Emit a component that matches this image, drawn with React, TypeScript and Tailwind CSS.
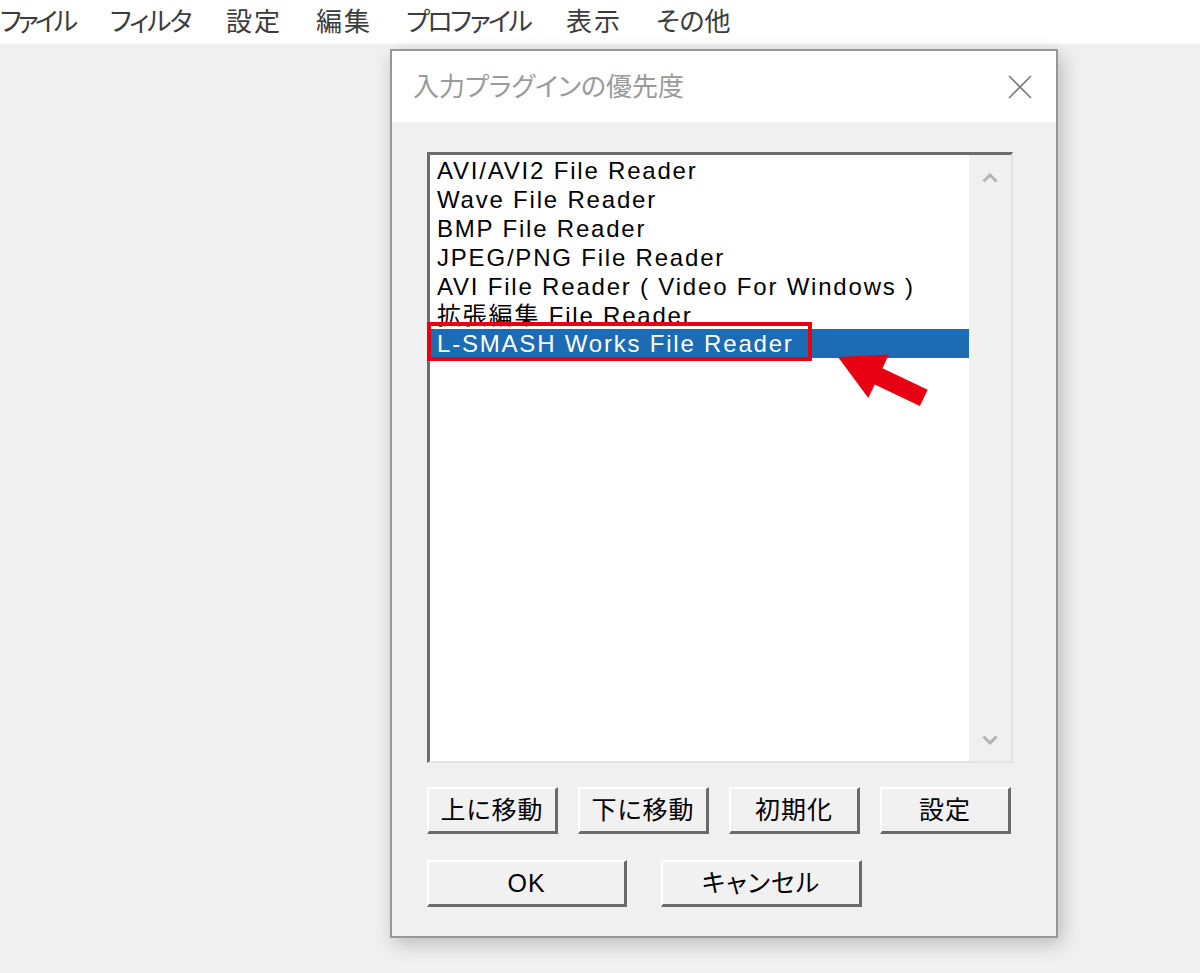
import React from "react";

const jp = "font-['Liberation_Sans','Noto_Sans_CJK_JP',sans-serif] [font-feature-settings:'palt']";

const menu: { label: string; w: string; t: string }[] = [
  { label: "ファイル", w: "w-[110px]", t: "tracking-[-4px]" },
  { label: "フィルタ", w: "w-[116px]", t: "tracking-[-2px]" },
  { label: "設定", w: "w-[90px]", t: "tracking-[2px]" },
  { label: "編集", w: "w-[90px]", t: "tracking-[2px]" },
  { label: "プロファイル", w: "w-[160px]", t: "tracking-[-2.5px]" },
  { label: "表示", w: "w-[90px]", t: "tracking-[2px]" },
  { label: "その他", w: "w-[90px]", t: "tracking-[0px]" },
];

const items = [
  "AVI/AVI2 File Reader",
  "Wave File Reader",
  "BMP File Reader",
  "JPEG/PNG File Reader",
  "AVI File Reader ( Video For Windows )",
  "拡張編集 File Reader",
];

function Btn({ label, w }: { label: string; w: string }) {
  return (
    <div
      className={`${w} h-[47px] flex items-center justify-center bg-[#f1f1f1] border-t-2 border-l-2 border-white border-r-[3px] border-b-[3px] border-r-[#6a6a6a] border-b-[#6a6a6a] text-[25px] tracking-[1px] text-black leading-none`}
    >
      {label}
    </div>
  );
}

export default function App() {
  return (
    <div className={`w-[1200px] h-[973px] flex flex-col bg-[#f0f0f0] overflow-hidden ${jp}`}>
      <div className="h-[44px] bg-white flex items-center text-[26px] text-[#3c3c3c] leading-none">
        {menu.map((m) => (
          <span key={m.label} className={`${m.w} ${m.t} shrink-0`}>
            {m.label}
          </span>
        ))}
      </div>

      <div className="flex-1 pl-[390px] pt-[5px]">
        <div className="w-[668px] h-[889px] border-2 border-[#979797] bg-[#f0f0f0] flex flex-col shadow-[4px_6px_18px_rgba(0,0,0,0.22)]">
          <div className="h-[71px] bg-white flex items-center justify-between pl-[21px] pr-[24px]">
            <span className="text-[26px] text-[#9a9a9a] leading-none">入力プラグインの優先度</span>
            <svg width="24" height="24" viewBox="0 0 24 24">
              <path d="M1 1 L23 23 M23 1 L1 23" stroke="#7a7a7a" strokeWidth="1.6" fill="none" />
            </svg>
          </div>

          <div className="flex-1 flex flex-col pl-[35px] pt-[30px]">
            <div className="w-[586px] h-[611px] flex border-t-[3px] border-l-[3px] border-t-[#6c6c6c] border-l-[#6c6c6c] border-r-2 border-b-2 border-r-[#e4e4e4] border-b-[#e4e4e4] bg-white">
              <div className="flex-1 flex flex-col text-[24px] tracking-[1.8px] text-black">
                {items.map((t) => (
                  <div key={t} className="h-[29px] pl-[7px] leading-[29px] pt-[1px] whitespace-nowrap">
                    {t}
                  </div>
                ))}
                <div className="relative z-10 h-[29px] pl-[7px] leading-[29px] bg-[#1b6cb4] text-white whitespace-nowrap">
                  L-SMASH Works File Reader
                  <div className="absolute -left-[3px] -top-[7px] w-[385px] h-[39px] border-4 border-[#e60012]" />
                  <svg
                    className="absolute left-[400px] top-[15px]"
                    width="105"
                    height="70"
                    viewBox="0 0 105 70"
                  >
                    <polygon
                      points="8,13 58.9,10.6 52.5,24.2 97.7,45.7 89.9,61.9 44.7,40.4 38.3,54"
                      fill="#e60012"
                    />
                  </svg>
                </div>
              </div>
              <div className="w-[42px] bg-[#f0f0f0] flex flex-col items-center justify-between pt-[18px] pb-[16px]">
                <svg width="16" height="10" viewBox="0 0 16 10">
                  <path d="M1.5 8.5 L8 2 L14.5 8.5" stroke="#b4b4b4" strokeWidth="3" fill="none" />
                </svg>
                <svg width="16" height="10" viewBox="0 0 16 10">
                  <path d="M1.5 1.5 L8 8 L14.5 1.5" stroke="#b4b4b4" strokeWidth="3" fill="none" />
                </svg>
              </div>
            </div>

            <div className="flex gap-[20px] mt-[24px]">
              <Btn label="上に移動" w="w-[131px]" />
              <Btn label="下に移動" w="w-[131px]" />
              <Btn label="初期化" w="w-[131px]" />
              <Btn label="設定" w="w-[131px]" />
            </div>
            <div className="flex gap-[34px] mt-[26px]">
              <Btn label="OK" w="w-[200px]" />
              <Btn label="キャンセル" w="w-[201px]" />
            </div>
          </div>
        </div>
      </div>
    </div>
  );
}
